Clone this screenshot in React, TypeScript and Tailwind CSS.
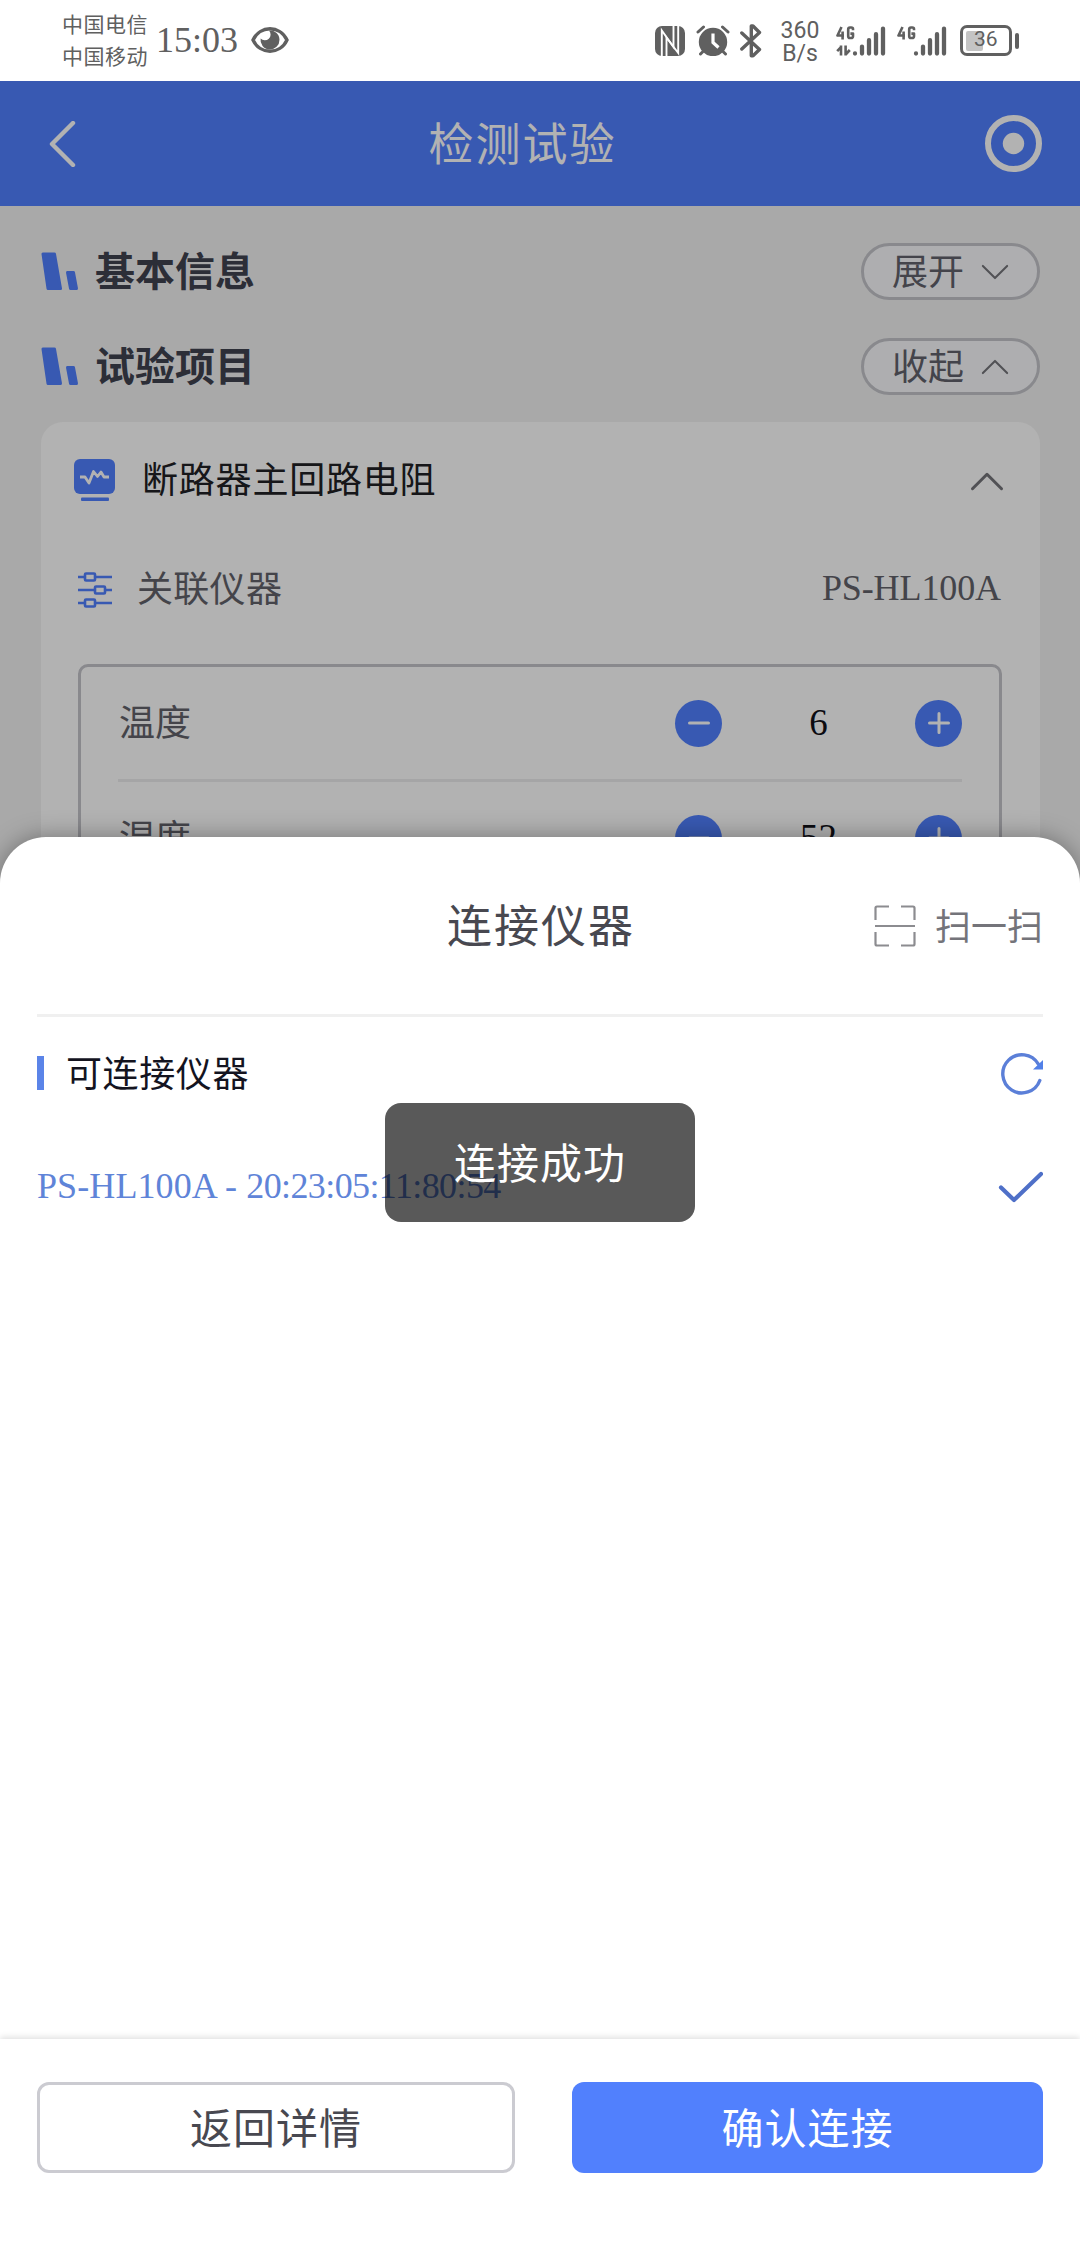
import type { ReactNode } from "react";

type Reading = { label: string; value: number };

const readings: Reading[] = [
  { label: "温度", value: 6 },
  { label: "湿度", value: 52 },
];

const cjk = "font-['Noto_Sans_CJK_SC',sans-serif]";
const serif = "font-['Liberation_Serif',serif]";

function Signal({ data }: { data?: boolean }) {
  return (
    <svg width="50" height="32" viewBox="0 0 50 32" fill="none" stroke="#606060" strokeLinecap="round">
      <g strokeWidth="2.6" strokeLinecap="butt" strokeLinejoin="round">
        <path d="M5.5 2 L1.5 10.5 H8 M6.6 6.5 V14.5" />
        <path d="M17 5.2 V4 Q17 2.5 15.3 2.5 H14 Q12.2 2.5 12.2 4.2 V11.2 Q12.2 13 14 13 H15 Q17 13 17 11.2 V8.6 H14.4" />
      </g>
      {data && (
        <g strokeWidth="2.6" strokeLinecap="butt">
          <path d="M5 20.5 V30.5 M5 22 L1.2 26.2" />
          <path d="M9.6 20.5 V30.5 M9.6 29.5 L13.8 25" />
        </g>
      )}
      <path strokeWidth="4.3" d="M19 28.4 V28.6 M26 21.6 V28.6 M33 15.2 V28.6 M40 9.2 V28.6 M47 3.6 V28.6" />
    </svg>
  );
}

function StatusBar() {
  return (
    <div className="flex h-[81px] shrink-0 items-center bg-white pl-[62px] pr-[61px] text-[#606060]">
      <div className={`${cjk} mb-[4px] w-[88px] text-[21px] leading-[32px] tracking-[0.5px] whitespace-nowrap`}>
        <p>中国电信</p>
        <p>中国移动</p>
      </div>
      <span className={`${serif} mb-[2px] ml-[6px] w-[84px] text-[36px] leading-none`}>15:03</span>
      <svg className="mb-[1px] ml-[11px]" width="38" height="28" viewBox="0 0 38 28">
        <path d="M2 14 C9 -1 29 -1 36 14 C29 29 9 29 2 14 Z" fill="none" stroke="#606060" strokeWidth="3.4" />
        <path d="M18 4.5 A9.5 9.5 0 1 1 9.6 12.5 A5 5 0 0 0 18 4.5 Z" fill="#606060" />
      </svg>
      <div className="ml-auto flex items-center">
        <svg width="30" height="30" viewBox="0 0 30 30">
          <rect width="30" height="30" rx="7" fill="#606060" />
          <path d="M6.8 30 V4.5 L18.5 21 V0" fill="none" stroke="#fff" strokeWidth="1.9" />
          <path d="M11.5 30 V11.5 L23.2 27 V0" fill="none" stroke="#fff" strokeWidth="1.9" />
        </svg>
        <svg className="ml-[11px]" width="34" height="31" viewBox="0 0 34 31">
          <circle cx="17" cy="17" r="14.2" fill="#606060" />
          <path d="M2 7 L7.5 2 M32 7 L26.5 2 M6.5 27 L4.5 29 M27.5 27 L29.5 29" stroke="#606060" strokeWidth="3" strokeLinecap="round" />
          <path d="M17 8.5 V17.5 L22.5 22.5" fill="none" stroke="#fff" strokeWidth="3.2" />
        </svg>
        <svg className="ml-[10px]" width="22" height="34" viewBox="0 0 22 34" fill="none" stroke="#606060" strokeWidth="3.4" strokeLinecap="round" strokeLinejoin="round">
          <path d="M1.8 9 L19.5 25.5 L13 31.8 H11.3 V2 H13 L19.5 8.5 L1.8 25" />
        </svg>
        <div className="ml-[17px] w-[42px] pt-[2px] text-center font-[Roboto] text-[23px] leading-[23px]">
          <p>360</p>
          <p>B/s</p>
        </div>
        <div className="ml-[15px] flex gap-[11px]">
          <Signal data />
          <Signal />
        </div>
        <div className="ml-[13px] flex h-[31px] w-[52px] items-center rounded-[7px] border-[3px] border-[#606060] p-[3px]">
          <div className="h-[20px] w-[17px] rounded-[2px] bg-[#c4c4c4]" />
          <span className="mb-[2px] -ml-[9px] font-[Roboto] text-[21px] leading-none">36</span>
        </div>
        <div className="ml-[3px] h-[16px] w-[4px] rounded-sm bg-[#606060]" />
      </div>
    </div>
  );
}

function Chevron({ up, width, stroke }: { up?: boolean; width: number; stroke: number }) {
  return (
    <svg width={width} height={width / 2 + 2} viewBox="0 0 30 17" fill="none" stroke="#75757a" strokeWidth={stroke} strokeLinecap="round" strokeLinejoin="round">
      <path d={up ? "M2 15 L15 2 L28 15" : "M2 2 L15 15 L28 2"} />
    </svg>
  );
}

function SectionHeader({ title, action, up }: { title: string; action: string; up?: boolean }) {
  return (
    <div className="flex h-[57px] items-center pl-[41px] pr-[40px]">
      <svg width="38" height="39" viewBox="0 0 38 39" fill="#5180ff" stroke="#5180ff" strokeWidth="3" strokeLinejoin="round">
        <path d="M2 2 H13.5 L19.5 36.5 H7 Z" />
        <path d="M26.5 20.5 H32.5 L35.5 36.5 H29.5 Z" />
      </svg>
      <h2 className="mb-[6px] ml-[16px] text-[40px] leading-none font-bold text-[#3f4250]">{title}</h2>
      <button className="ml-auto flex h-[57px] w-[179px] items-center rounded-full border-[3px] border-[#c4c5ca] bg-[#f9fafd] pl-[28px] text-[36px] leading-none text-[#62626c]">
        <span className="mb-[6px]">{action}</span>
        <span className="ml-[17px]">
          <Chevron up={up} width={28} stroke={2.2} />
        </span>
      </button>
    </div>
  );
}

function RoundButton({ children }: { children: ReactNode }) {
  return (
    <button className="grid h-[47px] w-[47px] place-items-center rounded-full bg-[#5180ff]">
      <svg width="22" height="22" viewBox="0 0 22 22" stroke="#fff" strokeWidth="3" strokeLinecap="round">
        {children}
      </svg>
    </button>
  );
}

function ReadingRow({ label, value }: Reading) {
  return (
    <div className="flex h-[115px] items-center border-b-[3px] border-[#ededee]">
      <span className="mb-[6px] ml-[1px] text-[36px] text-[#62626a]">{label}</span>
      <div className="ml-auto flex items-center">
        <RoundButton>
          <path d="M1.5 11 H20.5" />
        </RoundButton>
        <span className={`${serif} w-[193px] text-center text-[37px] text-[#101018]`}>{value}</span>
        <RoundButton>
          <path d="M1.5 11 H20.5 M11 1.5 V20.5" />
        </RoundButton>
      </div>
    </div>
  );
}

function TestPage() {
  return (
    <main className="relative h-[800px] shrink-0 bg-[#f3f3f3]">
      <header className="grid h-[125px] grid-cols-[1fr_auto_1fr] items-center bg-[#5180ff] pl-[49px] pr-[38px]">
        <svg width="28" height="46" viewBox="0 0 28 46" fill="none" stroke="#fff" strokeWidth="4.4" strokeLinecap="round" strokeLinejoin="round">
          <path d="M24 2 L3 23 L24 44" />
        </svg>
        <h1 className="mr-[46px] mb-[4px] text-[45px] tracking-[2px] text-white">检测试验</h1>
        <svg className="justify-self-end" width="57" height="57" viewBox="0 0 57 57">
          <circle cx="28.5" cy="28.5" r="25.5" fill="none" stroke="#fff" strokeWidth="6" />
          <circle cx="28.5" cy="28.5" r="10.7" fill="#fff" />
        </svg>
      </header>

      <div className="flex flex-col gap-[38px] pt-[37px]">
        <SectionHeader title="基本信息" action="展开" />
        <SectionHeader title="试验项目" action="收起" up />
      </div>

      <section className="mr-[40px] ml-[41px] mt-[27px] h-[500px] rounded-t-[22px] bg-white">
        <div className="flex h-[116px] items-center pl-[33px] pr-[36px]">
          <svg width="42" height="43" viewBox="0 0 42 43">
            <rect width="41" height="35" rx="6" fill="#5180ff" />
            <path d="M6 18 H11 L15 24 L19.5 12.5 L23.5 17.5 L27 13 L30 18 H35" fill="none" stroke="#fff" strokeWidth="2.8" strokeLinejoin="round" />
            <rect x="7" y="38.5" width="28" height="3.4" rx="1" fill="#5180ff" />
          </svg>
          <h3 className="mb-[6px] ml-[26px] text-[36px] tracking-[0.8px] text-[#202024]">断路器主回路电阻</h3>
          <span className="ml-auto mt-[3px]">
            <Chevron up width={34} stroke={2.7} />
          </span>
        </div>

        <div className="flex h-[104px] items-center pl-[37px] pr-[39px] text-[36px] text-[#62626a]">
          <svg width="34" height="36" viewBox="0 0 34 36" fill="none" stroke="#5180ff" strokeWidth="2.6">
            <path d="M0 5 H7 M17 5 H34 M0 18 H17 M27 18 H34 M0 31 H7 M17 31 H34" />
            <rect x="7" y="1.5" width="10" height="7" rx="1" />
            <rect x="17" y="14.5" width="10" height="7" rx="1" />
            <rect x="7" y="27.5" width="10" height="7" rx="1" />
          </svg>
          <span className="mb-[8px] ml-[25px] tracking-[0.3px]">关联仪器</span>
          <span className={`${serif} mb-[5px] ml-auto tracking-[-0.1px]`}>PS-HL100A</span>
        </div>

        <div className="mr-[38px] ml-[37px] mt-[22px] h-[300px] rounded-[10px] border-[3px] border-[#c4c4ca] px-[37px]">
          {readings.map((r) => (
            <ReadingRow key={r.label} {...r} />
          ))}
        </div>
      </section>
    </main>
  );
}

function ConnectSheet() {
  return (
    <section className="absolute inset-x-0 bottom-0 flex h-[1407px] flex-col rounded-t-[46px] bg-white shadow-[0_0_24px_rgba(0,0,0,0.35)]">
      <div className="mx-[37px] grid h-[180px] grid-cols-[1fr_auto_1fr] items-center border-b-[3px] border-[#f0f0f0]">
        <span />
        <h2 className="mb-[4px] pl-[2px] text-[45px] tracking-[2px] text-[#484850]">连接仪器</h2>
        <button className="flex items-center justify-end text-[36px] text-[#74747a]">
          <svg className="mr-[19px]" width="42" height="42" viewBox="0 0 42 42" fill="none" stroke="#8c8c90" strokeWidth="2.2">
            <path d="M1.5 15 V3 Q1.5 1.5 3 1.5 H15 M27 1.5 H39 Q40.5 1.5 40.5 3 V15 M40.5 27 V39 Q40.5 40.5 39 40.5 H27 M15 40.5 H3 Q1.5 40.5 1.5 39 V27 M1 21 H41" />
          </svg>
          <span className="mb-[4px]">扫一扫</span>
        </button>
      </div>

      <div className="mx-[37px] mt-[38px] flex h-[36px] items-center">
        <span className="h-[34px] w-[7px] bg-[#5b84e8]" />
        <h3 className="mb-[4px] ml-[22px] text-[36px] tracking-[0.6px] text-[#14141f]">可连接仪器</h3>
        <svg className="mt-[1px] ml-auto" width="43" height="44" viewBox="0 0 43 44">
          <path d="M39.8 28.5 A19.1 19.1 0 1 1 38.2 11.9" fill="none" stroke="#5b7fd8" strokeWidth="3.4" strokeLinecap="round" />
          <path d="M43 8 V17.5 H33 Z" fill="#5180e8" />
        </svg>
      </div>

      <div className="mx-[37px] mt-[75px] flex h-[40px] items-center">
        <p className={`${serif} mb-[1px] text-[36px] whitespace-pre text-[#5f84d8]`}>
          <span className="tracking-[0.1px]">PS-HL100A - </span>
          <span className="tracking-[-0.6px]">20:23:05:11:80:54</span>
        </p>
        <svg className="mt-[2px] ml-auto" width="46" height="32" viewBox="0 0 46 32" fill="none" stroke="#4f70c8" strokeWidth="4.2" strokeLinecap="round" strokeLinejoin="round">
          <path d="M4 16.5 L17 29 L44 3" />
        </svg>
      </div>

      <footer className="mt-auto flex h-[205px] gap-[57px] px-[37px] pt-[43px] shadow-[0_-2px_6px_rgba(0,0,0,0.12)]">
        <button className="h-[91px] w-[478px] rounded-[12px] border-[3px] border-[#cbcbd1] pb-[4px] text-[42px] tracking-[1px] text-[#484850]">返回详情</button>
        <button className="h-[91px] flex-1 rounded-[12px] bg-[#5180fd] pb-[4px] text-[42px] tracking-[1px] text-white">确认连接</button>
      </footer>
    </section>
  );
}

export default function App() {
  return (
    <div className={`${cjk} relative flex h-[2244px] w-[1080px] flex-col overflow-hidden bg-white`}>
      <StatusBar />
      <TestPage />
      <div className="absolute inset-x-0 top-[81px] bottom-0 bg-black/30" />
      <ConnectSheet />
      <div className="absolute top-[1103px] left-[385px] grid h-[119px] w-[310px] place-items-center rounded-[16px] bg-black/65 pb-[4px] text-[42px] tracking-[1px] text-white">
        连接成功
      </div>
    </div>
  );
}
